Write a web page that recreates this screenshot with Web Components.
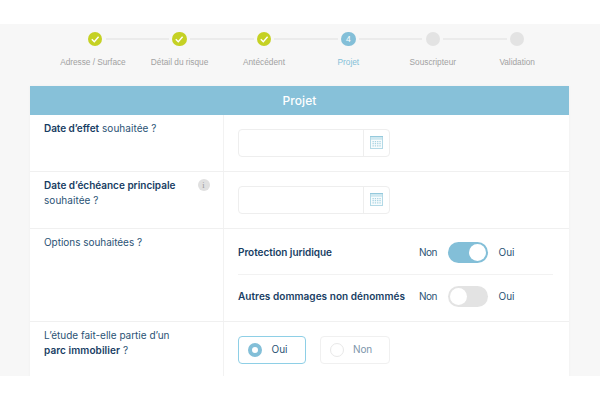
<!DOCTYPE html>
<html lang="fr"><head><meta charset="utf-8"><title>Projet</title>
<style>
html,body{margin:0;background:#fff}
body{width:600px;height:400px;overflow:hidden;font-family:Inter,"Open Sans",sans-serif;font-size:10px;color:#2b5375}
</style></head><body>
<quote-page></quote-page>
<script>
function define(name, html, init){
  customElements.define(name, class extends HTMLElement{
    connectedCallback(){
      if(this.shadowRoot) return;
      const t=document.createElement('template');
      t.innerHTML=html;
      this.attachShadow({mode:'open'}).append(t.content.cloneNode(true));
      if(init) init(this,this.shadowRoot);
    }
  });
}

// Single line of text, tracked so that it fills the width given in "w".
define('fit-text', `<style>:host{display:inline-block;white-space:nowrap;line-height:15px;height:15px;font-size:10px;font-weight:400}
:host([bold]){font-weight:600;color:#173d63}span{display:inline-block}</style><span><slot></slot></span>`, (el,root)=>{
  const s=root.querySelector('span'), w=+el.getAttribute('w'), n=el.textContent.length;
  const natural=s.getBoundingClientRect().width;
  s.style.letterSpacing=((w-natural)/n)+'px';
  el.style.width=w+'px';
});

define('step-item', `<style>
:host{display:grid;grid-template-rows:15px 1fr;justify-items:center;width:84.4px;color:#a2a2a2;position:relative}
.dot{width:14.4px;height:14.4px;border-radius:50%;background:#e3e3e3;display:grid;place-items:center;color:#fff;font:400 8.5px/14px "Liberation Sans",sans-serif}
:host([state=done]) .dot{background:#c5d124}
:host([state=current]) .dot{background:#83bfd8}
:host([state=current]){color:#83bfd8}
svg{display:none;width:14.4px;height:14.4px}
:host([state=done]) svg{display:block}
:host(:not([last]))::after{content:"";position:absolute;left:52.6px;top:6.5px;width:63.6px;height:1.5px;background:#ebebeb}
.label{margin-top:8px;margin-left:var(--nudge,0);}
fit-text{font-family:"Liberation Sans",Arial,sans-serif;font-size:8.3px}
</style><div class="dot"><svg viewBox="0 0 14.4 14.4"><path d="M3.8 7.2l2.5 2.5 4.3-4.9" fill="none" stroke="#fff" stroke-width="1.4"/></svg></div><div class="label"></div>`, (el,root)=>{
  if(el.getAttribute('state')==='current') root.querySelector('.dot').append(el.getAttribute('number'));
  const f=document.createElement('fit-text');
  f.setAttribute('w',el.getAttribute('w'));
  f.textContent=el.getAttribute('label');
  root.querySelector('.label').append(f);
});

define('step-bar', `<style>:host{display:flex;padding:7.8px 0 0 53px;height:54.6px}</style>
<step-item state="done" label="Adresse / Surface" w="65.5" style="--nudge:-4.5px"></step-item>
<step-item state="done" label="Détail du risque" w="57.5"></step-item>
<step-item state="done" label="Antécédent" w="42"></step-item>
<step-item state="current" number="4" label="Projet" w="21.5"></step-item>
<step-item label="Souscripteur" w="46.5"></step-item>
<step-item last label="Validation" w="35.5"></step-item>`);

define('form-row', `<style>:host{display:grid;grid-template-columns:194px 1fr;border-bottom:1px solid #f0f0f0;box-sizing:border-box}
:host([last]){border-bottom:0}
.q{border-right:1px solid #f2f2f2;padding:6.2px 13.5px 0 14px;display:flex;justify-content:space-between}
.a{padding-left:14px}</style>
<div class="q"><div><slot name="q"></slot></div><slot name="tip"></slot></div><div class="a"><slot></slot></div>`);

define('info-tip', `<style>:host{display:grid;place-items:center;width:12px;height:12px;border-radius:50%;background:#e0e0e0;color:#999;font:400 8.5px/12px "Liberation Serif",serif;margin-top:1.5px}</style><slot></slot>`);

define('date-field', `<style>:host{display:flex;width:152px;height:28px;box-sizing:border-box;border:1px solid #eee;border-radius:4px;background:#fff}
.in{width:124px;border-right:1px solid #eee}.b{flex:1;display:grid;place-items:center}svg{width:13px;height:13px;display:block}</style>
<div class="in"></div><div class="b"><svg viewBox="0 0 13 13"><rect x=".5" y=".5" width="12" height="12" fill="#f8fcfd" stroke="#b3d9e6"/><path d="M1 1h11v2.8H1z" fill="#cfe8f0"/><path d="M0 .5h13" stroke="#95c9dc"/><path d="M2.5 5.6h8.4M2.5 7.7h8.4M2.5 9.8h8.4" stroke="#a8d3e2" stroke-width="1.2" stroke-dasharray="1.3 1"/></svg></div>`);

define('toggle-switch', `<style>:host{display:flex;align-items:center;box-sizing:border-box;width:40px;height:21px;border-radius:11px;background:#e3e3e3;padding:0 2px}
:host([on]){background:#83bfd8;justify-content:flex-end}i{width:17px;height:17px;border-radius:50%;background:#fff}</style><i></i>`);

define('option-line', `<style>:host{display:grid;grid-template-columns:181px 29px 50.5px 1fr;align-items:center;width:315px;height:43px;box-sizing:border-box}
</style><slot></slot><fit-text w="18">Non</fit-text><toggle-switch></toggle-switch><fit-text w="16">Oui</fit-text>`, (el,root)=>{
  if(el.hasAttribute('on')) root.querySelector('toggle-switch').setAttribute('on','');
});

define('radio-choice', `<style>:host{display:flex;align-items:center;box-sizing:border-box;height:28px;border:1px solid #f0f0f0;border-radius:4px;padding-left:9px;gap:9.5px;color:#7d95ab;background:#fff}
i{box-sizing:border-box;width:14px;height:14px;border-radius:50%;border:1px solid #e8e8e8}
:host([checked]){border-color:#8ecfe6;color:#2b5375}:host([checked]) i{border:4px solid #83bfd8}</style><i></i><slot></slot>`);

define('quote-page', `<style>
:host{display:block;margin-top:24px;height:352px;background:#f7f7f7;overflow:hidden}
.card{width:539px;margin-left:30px;background:#fff;box-shadow:0 0 3px rgba(0,0,0,.04)}
header{height:28.4px;background:#87c1d9;color:#fff;display:grid;place-items:center}
header fit-text{font-size:12px;font-weight:500}
.choices{display:flex;gap:14px;padding-top:14px}
.ln{border-bottom:1px solid #f2f2f2}
[slot=q]{display:flex;flex-direction:column}
.l{display:flex;gap:3px}
</style>
<step-bar></step-bar>
<div class="card">
<header><fit-text w="34">Projet</fit-text></header>
<form-row style="height:57px"><div slot="q"><div class="l"><fit-text bold w="55">Date d’effet</fit-text><fit-text w="54.5">souhaitée ?</fit-text></div></div><date-field style="margin-top:14px"></date-field></form-row>
<form-row style="height:57px"><div slot="q"><fit-text bold w="131.5">Date d’échéance principale</fit-text><fit-text w="54.5">souhaitée ?</fit-text></div><info-tip slot="tip">i</info-tip><date-field style="margin-top:14px"></date-field></form-row>
<form-row style="height:93px"><div slot="q"><fit-text w="98">Options souhaitées ?</fit-text></div>
<option-line on class="ln" style="margin-top:3px"><fit-text bold w="94">Protection juridique</fit-text></option-line>
<option-line><fit-text bold w="167">Autres dommages non dénommés</fit-text></option-line></form-row>
<form-row last style="height:60px"><div slot="q"><fit-text w="125.5">L’étude fait-elle partie d’un</fit-text><div class="l"><fit-text bold w="76">parc immobilier</fit-text><fit-text w="5.5">?</fit-text></div></div>
<div class="choices"><radio-choice checked style="width:67.5px"><fit-text w="16">Oui</fit-text></radio-choice><radio-choice style="width:70.5px"><fit-text w="19">Non</fit-text></radio-choice></div></form-row>
</div>`);
</script></body></html>
